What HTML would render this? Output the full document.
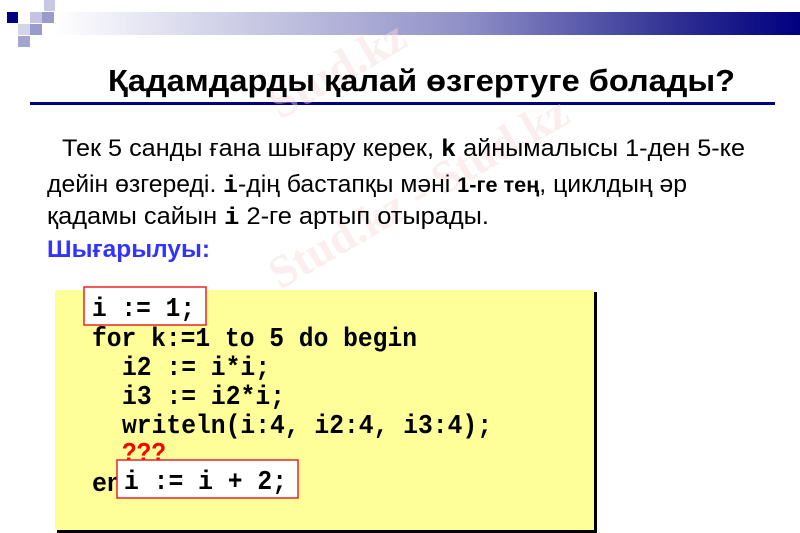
<!DOCTYPE html>
<html><head><meta charset="utf-8"><style>
html,body{margin:0;padding:0;background:#fff;width:800px;height:533px;overflow:hidden;position:relative}
.sq{position:absolute}
</style></head><body>
<div class="sq" style="left:44px;top:0;width:11px;height:11px;background:#c8c8e4"></div>
<div class="sq" style="left:7px;top:12px;width:11px;height:11px;background:#000080"></div>
<div class="sq" style="left:30px;top:12px;width:12px;height:11px;background:#c4c4e2"></div>
<div class="sq" style="left:42px;top:12px;width:12px;height:11px;background:#9a9acc"></div>
<div class="sq" style="left:18px;top:24px;width:12px;height:11px;background:#d4d4ea"></div>
<div class="sq" style="left:30px;top:24px;width:12px;height:11px;background:#9a9acc"></div>
<div class="sq" style="left:18px;top:36px;width:12px;height:11px;background:#a4a4d0"></div>
<div class="sq" style="left:54px;top:12px;width:746px;height:23px;background:linear-gradient(90deg,#ffffff 0%,#e0e0f0 15%,#9090c8 55%,#2a2a90 85%,#000080 100%)"></div>
<div class="sq" style="left:30px;top:102px;width:745px;height:3px;background:#000080"></div>

<svg width="800" height="533" style="position:absolute;left:0;top:0" xmlns="http://www.w3.org/2000/svg">
<g font-family="Liberation Serif, serif" font-weight="bold" font-size="46" fill="#f4dada" opacity="0.45">
<text x="280" y="120" transform="rotate(-30 280 120)">Stud.kz</text>
<text x="280" y="290" transform="rotate(-30 280 290)">Stud.kz - Stud.kz</text>
<text x="280" y="490" transform="rotate(-30 280 490)">Stud.kz - Stud.kz</text>
</g>
<text x="108" y="91" font-family="Liberation Sans, sans-serif" font-weight="bold" font-size="31" textLength="627" lengthAdjust="spacingAndGlyphs">Қадамдарды қалай өзгертуге болады?</text>
<g font-family="Liberation Sans, sans-serif" font-size="24" fill="#000">
<text x="62" y="156" textLength="683" lengthAdjust="spacingAndGlyphs">Тек 5 санды ғана шығару керек, <tspan font-family="Liberation Mono, monospace" font-weight="bold">k</tspan>  айнымалысы 1-ден 5-ке</text>
<text x="47" y="192" textLength="640" lengthAdjust="spacingAndGlyphs">дейін өзгереді. <tspan font-family="Liberation Mono, monospace" font-weight="bold">i</tspan>-дің бастапқы мәні <tspan font-weight="bold" font-size="21">1-ге тең</tspan>, циклдың әр</text>
<text x="47" y="224" textLength="442" lengthAdjust="spacingAndGlyphs">қадамы сайын <tspan font-family="Liberation Mono, monospace" font-weight="bold">i</tspan>  2-ге артып отырады.</text>
<text x="47" y="257" textLength="163" lengthAdjust="spacingAndGlyphs" font-weight="bold" fill="#3333ff">Шығарылуы:</text>
</g>
<rect x="57" y="292" width="540" height="241" fill="#000"/>
<rect x="55" y="290" width="539" height="240" fill="#ffff99"/>
<g font-family="Liberation Mono, monospace" font-weight="bold" font-size="27" fill="#000">
<rect x="84" y="287" width="122" height="38" fill="#fff" stroke="#ee2222" stroke-width="1.5"/>
<text x="92" y="316" textLength="103" lengthAdjust="spacingAndGlyphs">i := 1;</text>
<text x="92" y="346" textLength="325" lengthAdjust="spacingAndGlyphs">for k:=1 to 5 do begin</text>
<text x="122" y="375" textLength="148" lengthAdjust="spacingAndGlyphs">i2 := i*i;</text>
<text x="122" y="404" textLength="163" lengthAdjust="spacingAndGlyphs">i3 := i2*i;</text>
<text x="122" y="433" textLength="370" lengthAdjust="spacingAndGlyphs">writeln(i:4, i2:4, i3:4);</text>
<text x="122" y="461" fill="#ff0000" textLength="44" lengthAdjust="spacingAndGlyphs">???</text>
<text x="92" y="491" textLength="30" lengthAdjust="spacingAndGlyphs">en</text>
<rect x="117" y="460" width="181" height="38" fill="#fff" stroke="#ee2222" stroke-width="1.5"/>
<text x="124" y="489" textLength="163" lengthAdjust="spacingAndGlyphs">i := i + 2;</text>
</g>
</svg>
</body></html>
